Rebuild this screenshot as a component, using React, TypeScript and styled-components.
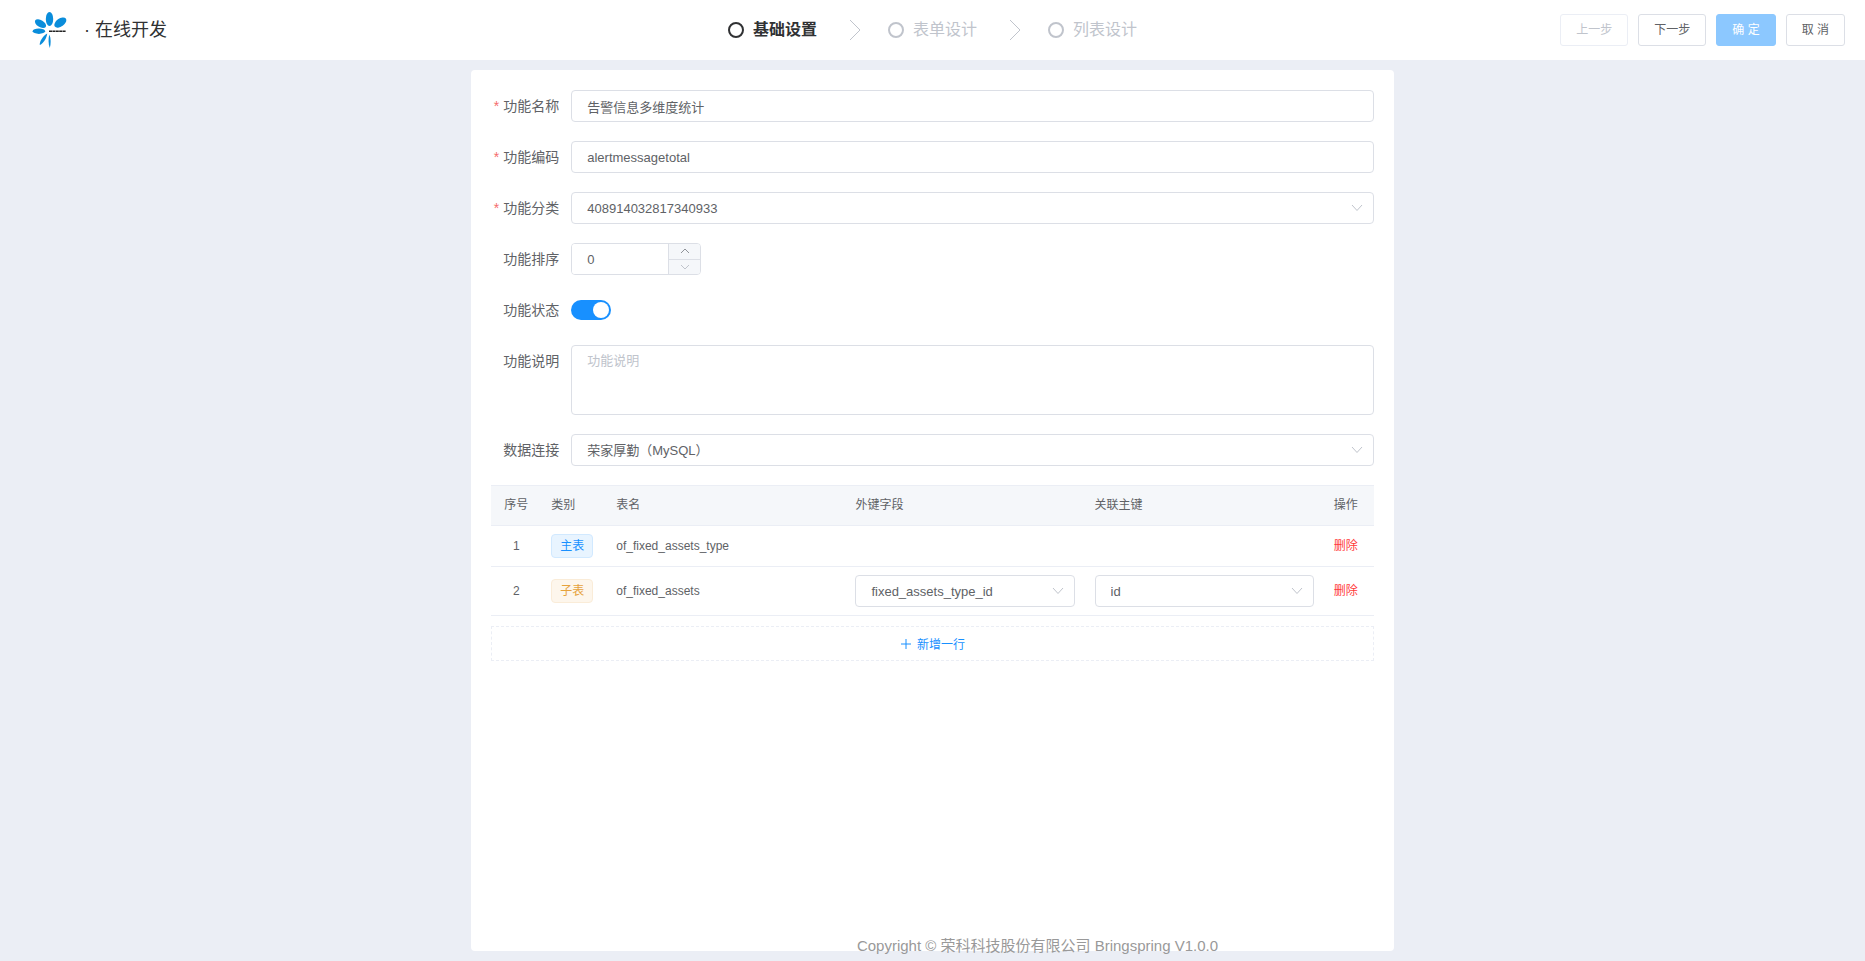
import React, { useState } from "react";
import styled, { createGlobalStyle, css } from "styled-components";

const color = {
  primary: "#1890ff",
  primaryDisabled: "#8cc8ff",
  text: "#606266",
  heading: "#303133",
  muted: "#c0c4cc",
  border: "#dcdfe6",
  line: "#ebeef5",
  page: "#ebeef5",
  stripe: "#f5f7fa",
  danger: "#ff3a3a",
};

const uiFont = `"Liberation Sans", "Noto Sans CJK SC", sans-serif`;

const GlobalStyle = createGlobalStyle`
  *, *::before, *::after { box-sizing: border-box; }
  body { margin: 0; background: ${color.page}; color: ${color.text}; font-family: ${uiFont}; font-size: 14px; }
  button, input, select, textarea { font-family: inherit; margin: 0; }
`;

const Page = styled.div`
  position: relative;
  display: flex;
  flex-direction: column;
  min-height: 100vh;
`;

const Header = styled.header`
  display: grid;
  grid-template-columns: 1fr auto 1fr;
  align-items: center;
  height: 60px;
  padding: 0 20px;
  background: #fff;
`;

const Brand = styled.div`
  display: flex;
  align-items: center;
  gap: 16px;
  padding-left: 12px;
`;

const BrandTitle = styled.h1`
  margin: 0;
  font-size: 18px;
  font-weight: 400;
  line-height: 24px;
  color: ${color.heading};
`;

const Steps = styled.ol`
  display: flex;
  align-items: center;
  margin: 0;
  padding: 0;
  list-style: none;
`;

const Step = styled.li<{ $active?: boolean }>`
  display: flex;
  align-items: center;
  gap: 9px;
  font-size: 16px;
  line-height: 24px;
  font-weight: ${(p) => (p.$active ? 700 : 400)};
  color: ${(p) => (p.$active ? color.heading : color.muted)};
`;

const StepDot = styled.span`
  width: 16px;
  height: 16px;
  border: 2px solid currentColor;
  border-radius: 50%;
`;

const StepArrow = styled.svg`
  width: 12px;
  height: 22px;
  margin: 0 27px 0 32px;
  fill: none;
  stroke: ${color.muted};
`;

const Actions = styled.div`
  display: flex;
  justify-content: flex-end;
  gap: 10px;
`;

const Button = styled.button<{ $primary?: boolean }>`
  height: 32px;
  padding: 0 15px;
  border: 1px solid ${color.border};
  border-radius: 3px;
  background: #fff;
  color: ${color.text};
  font-size: 12px;
  line-height: 12px;
  white-space: pre;
  cursor: pointer;
  &:disabled {
    color: ${color.muted};
    border-color: ${color.line};
    cursor: not-allowed;
  }
  ${(p) =>
    p.$primary &&
    css`
      &,
      &:disabled {
        background: ${color.primaryDisabled};
        border-color: ${color.primaryDisabled};
        color: #fff;
      }
    `}
`;

const Main = styled.main`
  display: flex;
  flex: 1;
  justify-content: center;
  padding: 10px;
`;

const Card = styled.section`
  width: 50%;
  padding: 20px;
  border-radius: 4px;
  background: #fff;
`;

const Form = styled.form`
  display: flex;
  flex-direction: column;
  gap: 19px;
`;

const FormRow = styled.div`
  display: flex;
  align-items: flex-start;
`;

const Label = styled.label<{ $required?: boolean }>`
  flex: none;
  width: 80px;
  padding-right: 12px;
  text-align: right;
  line-height: 32px;
  ${(p) =>
    p.$required &&
    css`
      &::before {
        content: "*";
        margin-right: 4px;
        color: #f56c6c;
      }
    `}
`;

const field = css`
  width: 100%;
  border: 1px solid ${color.border};
  border-radius: 4px;
  background: #fff;
  color: ${color.text};
  font-size: 13px;
  outline: none;
  &::placeholder {
    color: ${color.muted};
    opacity: 1;
  }
  &:focus {
    border-color: ${color.primary};
  }
`;

const TextInput = styled.input`
  ${field}
  height: 32px;
  padding: 0 15px;
`;

const TextArea = styled.textarea`
  ${field}
  display: block;
  height: 70px;
  padding: 5px 15px;
  line-height: 20px;
  resize: none;
`;

const SelectBox = styled.div`
  position: relative;
  width: 100%;
`;

const NativeSelect = styled.select`
  ${field}
  display: block;
  height: 32px;
  padding: 0 30px 0 15px;
  appearance: none;
`;

const SelectIcon = styled.svg`
  position: absolute;
  top: 10px;
  right: 11px;
  width: 12px;
  height: 12px;
  fill: none;
  stroke: ${color.muted};
  pointer-events: none;
`;

const NumberBox = styled.div`
  display: flex;
  width: 130px;
  height: 32px;
  border: 1px solid ${color.border};
  border-radius: 4px;
  overflow: hidden;
`;

const NumberInput = styled.input`
  flex: 1;
  min-width: 0;
  padding: 0 15px;
  border: 0;
  outline: none;
  color: ${color.text};
  font-size: 13px;
  appearance: textfield;
  &::-webkit-inner-spin-button {
    appearance: none;
  }
`;

const Spinners = styled.div`
  display: flex;
  flex-direction: column;
  width: 32px;
  border-left: 1px solid ${color.border};
`;

const SpinButton = styled.button`
  display: flex;
  flex: 1;
  align-items: center;
  justify-content: center;
  padding: 0;
  border: 0;
  background: ${color.stripe};
  color: #909399;
  &:disabled {
    color: ${color.muted};
  }
  & + & {
    border-top: 1px solid ${color.border};
  }
  svg {
    width: 10px;
    height: 10px;
    fill: none;
    stroke: currentColor;
  }
`;

const SwitchCell = styled.div`
  display: flex;
  align-items: center;
  height: 32px;
`;

const Switch = styled.input`
  display: flex;
  width: 40px;
  height: 20px;
  padding: 2px;
  border-radius: 10px;
  background: ${color.border};
  appearance: none;
  cursor: pointer;
  &::before {
    content: "";
    width: 16px;
    height: 16px;
    border-radius: 50%;
    background: #fff;
  }
  &:checked {
    justify-content: flex-end;
    background: ${color.primary};
  }
`;

const Table = styled.table`
  width: 100%;
  margin-top: 19px;
  border-collapse: separate;
  border-spacing: 0;
  table-layout: fixed;
  font-size: 12px;
  line-height: 23px;
`;

const Col = styled.col<{ $width?: number }>`
  width: ${(p) => (p.$width ? `${p.$width}px` : "auto")};
`;

const HeadCell = styled.th<{ $center?: boolean }>`
  height: 41px;
  padding: 0 10px;
  border-top: 1px solid ${color.line};
  border-bottom: 1px solid ${color.line};
  background: ${color.stripe};
  font-weight: 400;
  text-align: ${(p) => (p.$center ? "center" : "left")};
  white-space: nowrap;
`;

const Cell = styled.td<{ $center?: boolean }>`
  height: 41px;
  padding: 8px 10px;
  border-bottom: 1px solid ${color.line};
  text-align: ${(p) => (p.$center ? "center" : "left")};
  white-space: nowrap;
`;

const Tag = styled.span<{ $kind: "main" | "child" }>`
  display: block;
  width: 42px;
  height: 24px;
  border: 1px solid ${(p) => (p.$kind === "main" ? "#d1e9ff" : "#faecd8")};
  border-radius: 4px;
  background: ${(p) => (p.$kind === "main" ? "#e8f4ff" : "#fdf6ec")};
  color: ${(p) => (p.$kind === "main" ? color.primary : "#e6a23c")};
  line-height: 22px;
  text-align: center;
`;

const DeleteButton = styled.button`
  padding: 0;
  border: 0;
  background: none;
  color: ${color.danger};
  font-size: 12px;
  line-height: 23px;
  cursor: pointer;
`;

const AddRow = styled.button`
  display: flex;
  align-items: center;
  justify-content: center;
  gap: 5px;
  width: 100%;
  height: 35px;
  margin-top: 10px;
  border: 1px dashed ${color.line};
  background: #fff;
  color: ${color.primary};
  font-size: 12px;
  cursor: pointer;
  svg {
    width: 12px;
    height: 12px;
    stroke: currentColor;
  }
`;

const Copyright = styled.footer`
  position: absolute;
  right: 0;
  bottom: 4px;
  left: 210px;
  color: #999;
  font-size: 15px;
  line-height: 22px;
  text-align: center;
  pointer-events: none;
`;

const Logo = () => (
  <svg width="36" height="38" viewBox="32 11 36 38" aria-hidden="true">
    <g fill="#0a8ddb">
      <ellipse cx="49.5" cy="19" rx="3.7" ry="7" />
      <ellipse cx="60.3" cy="22.6" rx="6.8" ry="4" transform="rotate(-36 60.3 22.6)" />
      <ellipse cx="40.5" cy="23.6" rx="6.2" ry="3.5" transform="rotate(32 40.5 23.6)" />
      <ellipse cx="38.9" cy="31.2" rx="6.2" ry="2.7" />
      <path d="M47.2 33.6C47 38 42.5 44.5 39.8 45C39.2 42 43 36 47.2 33.6Z" />
      <path d="M49.4 34.5C51 38 51 44 49.8 48C48.2 44 48.2 38 49.4 34.5Z" />
    </g>
    <path d="M49 31.2H66" stroke="#222" strokeWidth="1.6" strokeDasharray="3 .4" />
  </svg>
);

const Arrow = () => (
  <StepArrow viewBox="0 0 12 22" aria-hidden="true">
    <path d="M1 1L11 11L1 21" />
  </StepArrow>
);

type SelectProps = { id?: string; label?: string; value: string };

const Select = ({ id, label, value }: SelectProps) => (
  <SelectBox>
    <NativeSelect id={id} aria-label={label} defaultValue={value}>
      <option value={value}>{value}</option>
    </NativeSelect>
    <SelectIcon viewBox="0 0 12 12" aria-hidden="true">
      <path d="M1 3L6 8.5L11 3" />
    </SelectIcon>
  </SelectBox>
);

type Row = { kind: "main" | "child"; name: string; foreignKey?: string; primaryKey?: string };

const initialRows: Row[] = [
  { kind: "main", name: "of_fixed_assets_type" },
  { kind: "child", name: "of_fixed_assets", foreignKey: "fixed_assets_type_id", primaryKey: "id" },
];

const steps = ["基础设置", "表单设计", "列表设计"];

export default function App() {
  const [order, setOrder] = useState(0);
  const [rows, setRows] = useState(initialRows);

  return (
    <Page>
      <GlobalStyle />
      <Header>
        <Brand>
          <Logo />
          <BrandTitle>· 在线开发</BrandTitle>
        </Brand>
        <Steps>
          {steps.map((name, i) => (
            <React.Fragment key={name}>
              {i > 0 && <Arrow />}
              <Step $active={i === 0}>
                <StepDot />
                {name}
              </Step>
            </React.Fragment>
          ))}
        </Steps>
        <Actions>
          <Button type="button" disabled>上一步</Button>
          <Button type="button">下一步</Button>
          <Button type="button" $primary disabled>确 定</Button>
          <Button type="button">取 消</Button>
        </Actions>
      </Header>

      <Main>
        <Card>
          <Form onSubmit={(e) => e.preventDefault()}>
            <FormRow>
              <Label htmlFor="name" $required>功能名称</Label>
              <TextInput id="name" defaultValue="告警信息多维度统计" />
            </FormRow>
            <FormRow>
              <Label htmlFor="code" $required>功能编码</Label>
              <TextInput id="code" defaultValue="alertmessagetotal" />
            </FormRow>
            <FormRow>
              <Label htmlFor="category" $required>功能分类</Label>
              <Select id="category" value="408914032817340933" />
            </FormRow>
            <FormRow>
              <Label htmlFor="order">功能排序</Label>
              <NumberBox>
                <NumberInput
                  id="order"
                  type="number"
                  min={0}
                  value={order}
                  onChange={(e) => setOrder(Number(e.target.value))}
                />
                <Spinners>
                  <SpinButton type="button" aria-label="增加" onClick={() => setOrder(order + 1)}>
                    <svg viewBox="0 0 10 10"><path d="M1 7L5 3L9 7" /></svg>
                  </SpinButton>
                  <SpinButton
                    type="button"
                    aria-label="减少"
                    disabled={order <= 0}
                    onClick={() => setOrder(order - 1)}
                  >
                    <svg viewBox="0 0 10 10"><path d="M1 3L5 7L9 3" /></svg>
                  </SpinButton>
                </Spinners>
              </NumberBox>
            </FormRow>
            <FormRow>
              <Label htmlFor="enabled">功能状态</Label>
              <SwitchCell>
                <Switch id="enabled" type="checkbox" defaultChecked />
              </SwitchCell>
            </FormRow>
            <FormRow>
              <Label htmlFor="description">功能说明</Label>
              <TextArea id="description" placeholder="功能说明" />
            </FormRow>
            <FormRow>
              <Label htmlFor="connection">数据连接</Label>
              <Select id="connection" value="荣家厚勤（MySQL）" />
            </FormRow>
          </Form>

          <Table>
            <colgroup>
              <Col $width={50} />
              <Col $width={65} />
              <Col />
              <Col />
              <Col />
              <Col $width={50} />
            </colgroup>
            <thead>
              <tr>
                <HeadCell $center>序号</HeadCell>
                <HeadCell>类别</HeadCell>
                <HeadCell>表名</HeadCell>
                <HeadCell>外键字段</HeadCell>
                <HeadCell>关联主键</HeadCell>
                <HeadCell>操作</HeadCell>
              </tr>
            </thead>
            <tbody>
              {rows.map((row, i) => (
                <tr key={i}>
                  <Cell $center>{i + 1}</Cell>
                  <Cell>
                    <Tag $kind={row.kind}>{row.kind === "main" ? "主表" : "子表"}</Tag>
                  </Cell>
                  <Cell>{row.name}</Cell>
                  <Cell>
                    {row.foreignKey && <Select label="外键字段" value={row.foreignKey} />}
                  </Cell>
                  <Cell>
                    {row.primaryKey && <Select label="关联主键" value={row.primaryKey} />}
                  </Cell>
                  <Cell>
                    <DeleteButton type="button" onClick={() => setRows(rows.filter((r) => r !== row))}>
                      删除
                    </DeleteButton>
                  </Cell>
                </tr>
              ))}
            </tbody>
          </Table>
          <AddRow type="button" onClick={() => setRows([...rows, { kind: "child", name: "" }])}>
            <svg viewBox="0 0 12 12" aria-hidden="true"><path d="M1 6H11M6 1V11" /></svg>
            新增一行
          </AddRow>
        </Card>
      </Main>
      <Copyright>Copyright © 荣科科技股份有限公司 Bringspring V1.0.0</Copyright>
    </Page>
  );
}
